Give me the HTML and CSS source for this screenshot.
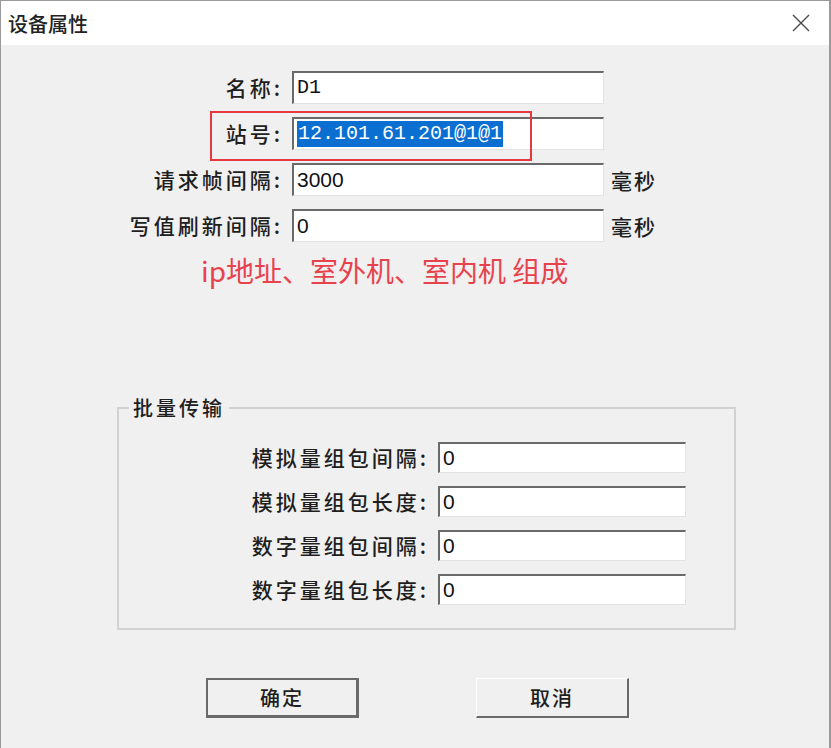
FILE: index.html
```html
<!DOCTYPE html>
<html lang="zh-CN">
<head>
    <meta charset="UTF-8">
    <title>设备属性</title>
    <link rel="stylesheet" href="styles.css">
</head>
<body>
    <div class="dialog">
        <div class="titlebar">
            <span class="titlebar__text">设备属性</span>
            <button class="titlebar__close" aria-label="关闭">
                <svg width="20" height="20" viewBox="0 0 20 20" aria-hidden="true">
                    <path d="M2 2 L18 18 M18 2 L2 18" stroke="#4a4a4a" stroke-width="1.4" fill="none"/>
                </svg>
            </button>
        </div>

        <div class="content">
            <div class="form">
                <label class="form__label">名称:</label>
                <div class="field field--serif">D1</div>
                <span></span>

                <label class="form__label">站号:</label>
                <div class="field field--serif"><span class="selected">12.101.61.201@1@1</span></div>
                <span></span>

                <label class="form__label">请求帧间隔:</label>
                <div class="field">3000</div>
                <span class="form__unit">毫秒</span>

                <label class="form__label">写值刷新间隔:</label>
                <div class="field">0</div>
                <span class="form__unit">毫秒</span>

                <!-- 标注框 -->
                <div class="highlight-box"></div>
            </div>

            <p class="note">ip地址、室外机、室内机 组成</p>

            <fieldset class="group">
                <legend class="group__title">批量传输</legend>
                <div class="group__form">
                    <label class="form__label">模拟量组包间隔:</label>
                    <div class="field field--small">0</div>

                    <label class="form__label">模拟量组包长度:</label>
                    <div class="field field--small">0</div>

                    <label class="form__label">数字量组包间隔:</label>
                    <div class="field field--small">0</div>

                    <label class="form__label">数字量组包长度:</label>
                    <div class="field field--small">0</div>
                </div>
            </fieldset>

            <div class="actions">
                <button class="btn btn--default">确定</button>
                <button class="btn">取消</button>
            </div>
        </div>
    </div>
</body>
</html>
```

FILE: styles.css
```css
:root {
    --face: #f0f0f0;
    --text: #1e1e1e;
    --shadow: #6a6a6a;
    --light: #e2e2e2;
    --cjk: "Noto Sans CJK SC", "Noto Sans", sans-serif;
}

* {
    box-sizing: border-box;
}

html, body {
    margin: 0;
    padding: 0;
    height: 100%;
    background: var(--face);
}

body {
    font-family: var(--cjk);
    color: var(--text);
    overflow: hidden;
}

.dialog {
    width: 831px;
    height: 748px;
    border: 1px solid #9a9a9a;
    border-right-width: 2px;
    border-bottom: none;
    background: var(--face);
}

.titlebar {
    height: 44px;
    background: #ffffff;
    display: flex;
    align-items: center;
    justify-content: space-between;
    padding: 0 18px 0 7px;
}

.titlebar__text {
    font-size: 20px;
    font-weight: 500;
    color: #222;
}

.titlebar__close {
    border: none;
    background: transparent;
    padding: 0;
    width: 20px;
    height: 20px;
    display: flex;
}

.content {
    padding-top: 26px;
}

.form {
    position: relative;
    display: grid;
    grid-template-columns: 282px 312px 64px;
    grid-auto-rows: 33px;
    column-gap: 9px;
    row-gap: 13px;
    align-items: center;
}

.form__label {
    font-size: 21px;
    font-weight: 500;
    letter-spacing: 3px;
    text-align: right;
    white-space: nowrap;
    line-height: 33px;
}

.form__unit {
    font-size: 21px;
    font-weight: 500;
    letter-spacing: 2px;
    margin-left: -2px;
}

.field {
    height: 33px;
    background: #ffffff;
    border-top: 2px solid var(--shadow);
    border-left: 2px solid var(--shadow);
    border-right: 1px solid var(--light);
    border-bottom: 1px solid var(--light);
    font-family: "Liberation Sans", sans-serif;
    font-size: 21px;
    line-height: 29px;
    padding-left: 3px;
    color: #111;
}

.field--serif {
    font-family: "Liberation Mono", monospace;
    font-size: 20px;
}

.field--small {
    height: 31px;
    line-height: 27px;
}

.selected {
    background: #0a6fd0;
    color: #ffffff;
    display: inline-block;
    line-height: 26px;
    padding: 0 1px;
    margin-top: 1px;
}

.highlight-box {
    position: absolute;
    left: 209px;
    top: 40px;
    width: 322px;
    height: 50px;
    border: 2px solid #e5393f;
    pointer-events: none;
}

.note {
    margin: 11px 0 0 200px;
    font-size: 28px;
    line-height: 34px;
    color: #e8434c;
    white-space: nowrap;
}

.group {
    margin: 109px 0 0 116px;
    width: 619px;
    padding: 22px 0 23px 0;
    border: 2px solid #d2d2d2;
    min-inline-size: 0;
}

.group__title {
    font-size: 20px;
    font-weight: 500;
    letter-spacing: 3px;
    line-height: 24px;
    margin-left: 10px;
    padding: 0 4px;
}

.group__form {
    display: grid;
    grid-template-columns: 310px 248px;
    grid-auto-rows: 31px;
    column-gap: 9px;
    row-gap: 13px;
    align-items: center;
}

.group__form .form__label {
    line-height: 31px;
}

.actions {
    display: flex;
    gap: 117px;
    padding-left: 205px;
    margin-top: 48px;
}

.btn {
    width: 153px;
    height: 40px;
    font-family: var(--cjk);
    font-size: 20px;
    font-weight: 500;
    letter-spacing: 2px;
    color: var(--text);
    background: var(--face);
    border: none;
    border-top: 1px solid #ffffff;
    border-left: 1px solid #ffffff;
    border-right: 2px solid var(--shadow);
    border-bottom: 2px solid var(--shadow);
    padding: 0;
}

.btn--default {
    border: 2px solid var(--shadow);
    border-right-width: 3px;
    border-bottom-width: 3px;
}
```
